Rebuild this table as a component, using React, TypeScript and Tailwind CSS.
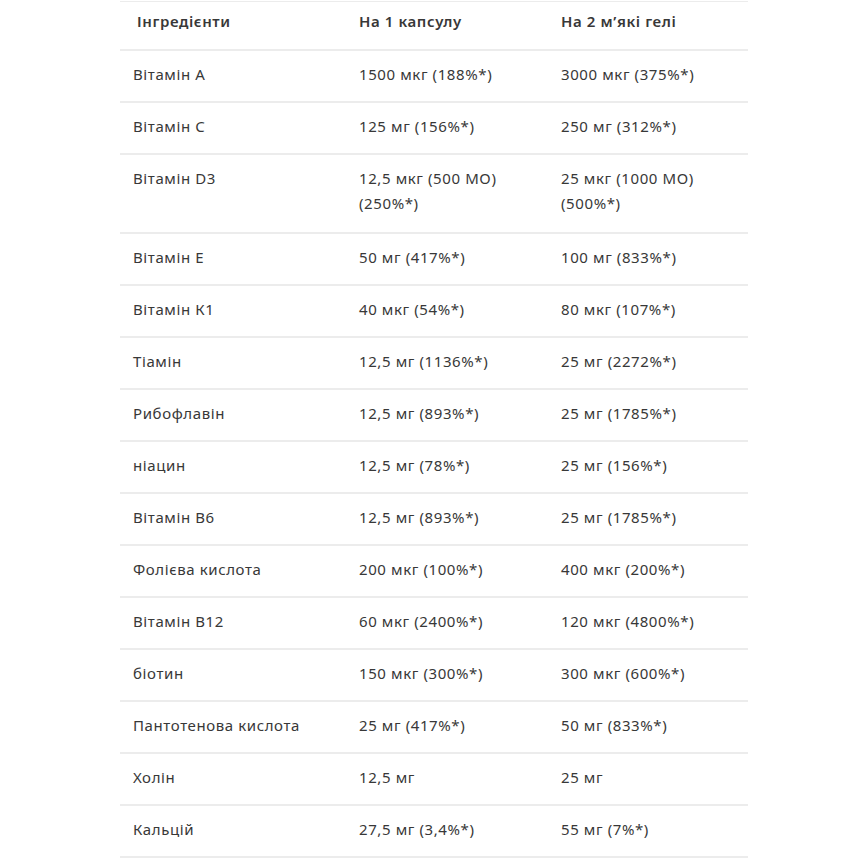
const rows: [string, string, string][] = [
  ["Вітамін A", "1500 мкг (188%*)", "3000 мкг (375%*)"],
  ["Вітамін C", "125 мг (156%*)", "250 мг (312%*)"],
  ["Вітамін D3", "12,5 мкг (500 МО) (250%*)", "25 мкг (1000 МО) (500%*)"],
  ["Вітамін E", "50 мг (417%*)", "100 мг (833%*)"],
  ["Вітамін К1", "40 мкг (54%*)", "80 мкг (107%*)"],
  ["Тіамін", "12,5 мг (1136%*)", "25 мг (2272%*)"],
  ["Рибофлавін", "12,5 мг (893%*)", "25 мг (1785%*)"],
  ["ніацин", "12,5 мг (78%*)", "25 мг (156%*)"],
  ["Вітамін B6", "12,5 мг (893%*)", "25 мг (1785%*)"],
  ["Фолієва кислота", "200 мкг (100%*)", "400 мкг (200%*)"],
  ["Вітамін B12", "60 мкг (2400%*)", "120 мкг (4800%*)"],
  ["біотин", "150 мкг (300%*)", "300 мкг (600%*)"],
  ["Пантотенова кислота", "25 мг (417%*)", "50 мг (833%*)"],
  ["Холін", "12,5 мг", "25 мг"],
  ["Кальцій", "27,5 мг (3,4%*)", "55 мг (7%*)"],
];

export default function App() {
  return (
    <div className="min-h-[860px] bg-white pt-[1px] font-['Noto_Sans',sans-serif] text-[15px] tracking-[0.6px] text-[#383838]">
      <table className="ml-[120px] w-[628px] table-fixed border-collapse">
        <thead>
          <tr className="border-t border-b-2 border-[#ececec]">
            <th className="w-[226px] pl-[17px] pt-[7px] pb-[16px] text-left align-top font-semibold leading-[24px]">
              Інгредієнти
            </th>
            <th className="w-[202px] pl-[13px] pt-[7px] pb-[16px] text-left align-top font-semibold leading-[24px]">
              На 1 капсулу
            </th>
            <th className="pl-[13px] pt-[7px] pb-[16px] text-left align-top font-semibold leading-[24px]">
              На 2 м’які гелі
            </th>
          </tr>
        </thead>
        <tbody>
          {rows.map(([name, one, two]) => {
            // two-line rows sit a little taller in the original
            const tall = one.length > 20;
            const cell = tall
              ? "pl-[13px] pr-3 pt-[11px] pb-[16px] align-top leading-[25px]"
              : "pl-[13px] pr-3 pt-[11px] pb-[14px] align-top leading-[25px]";
            return (
              <tr key={name} className="border-b-2 border-[#ececec]">
                <td className={cell}>{name}</td>
                <td className={cell}>{one}</td>
                <td className={cell}>{two}</td>
              </tr>
            );
          })}
        </tbody>
      </table>
    </div>
  );
}
